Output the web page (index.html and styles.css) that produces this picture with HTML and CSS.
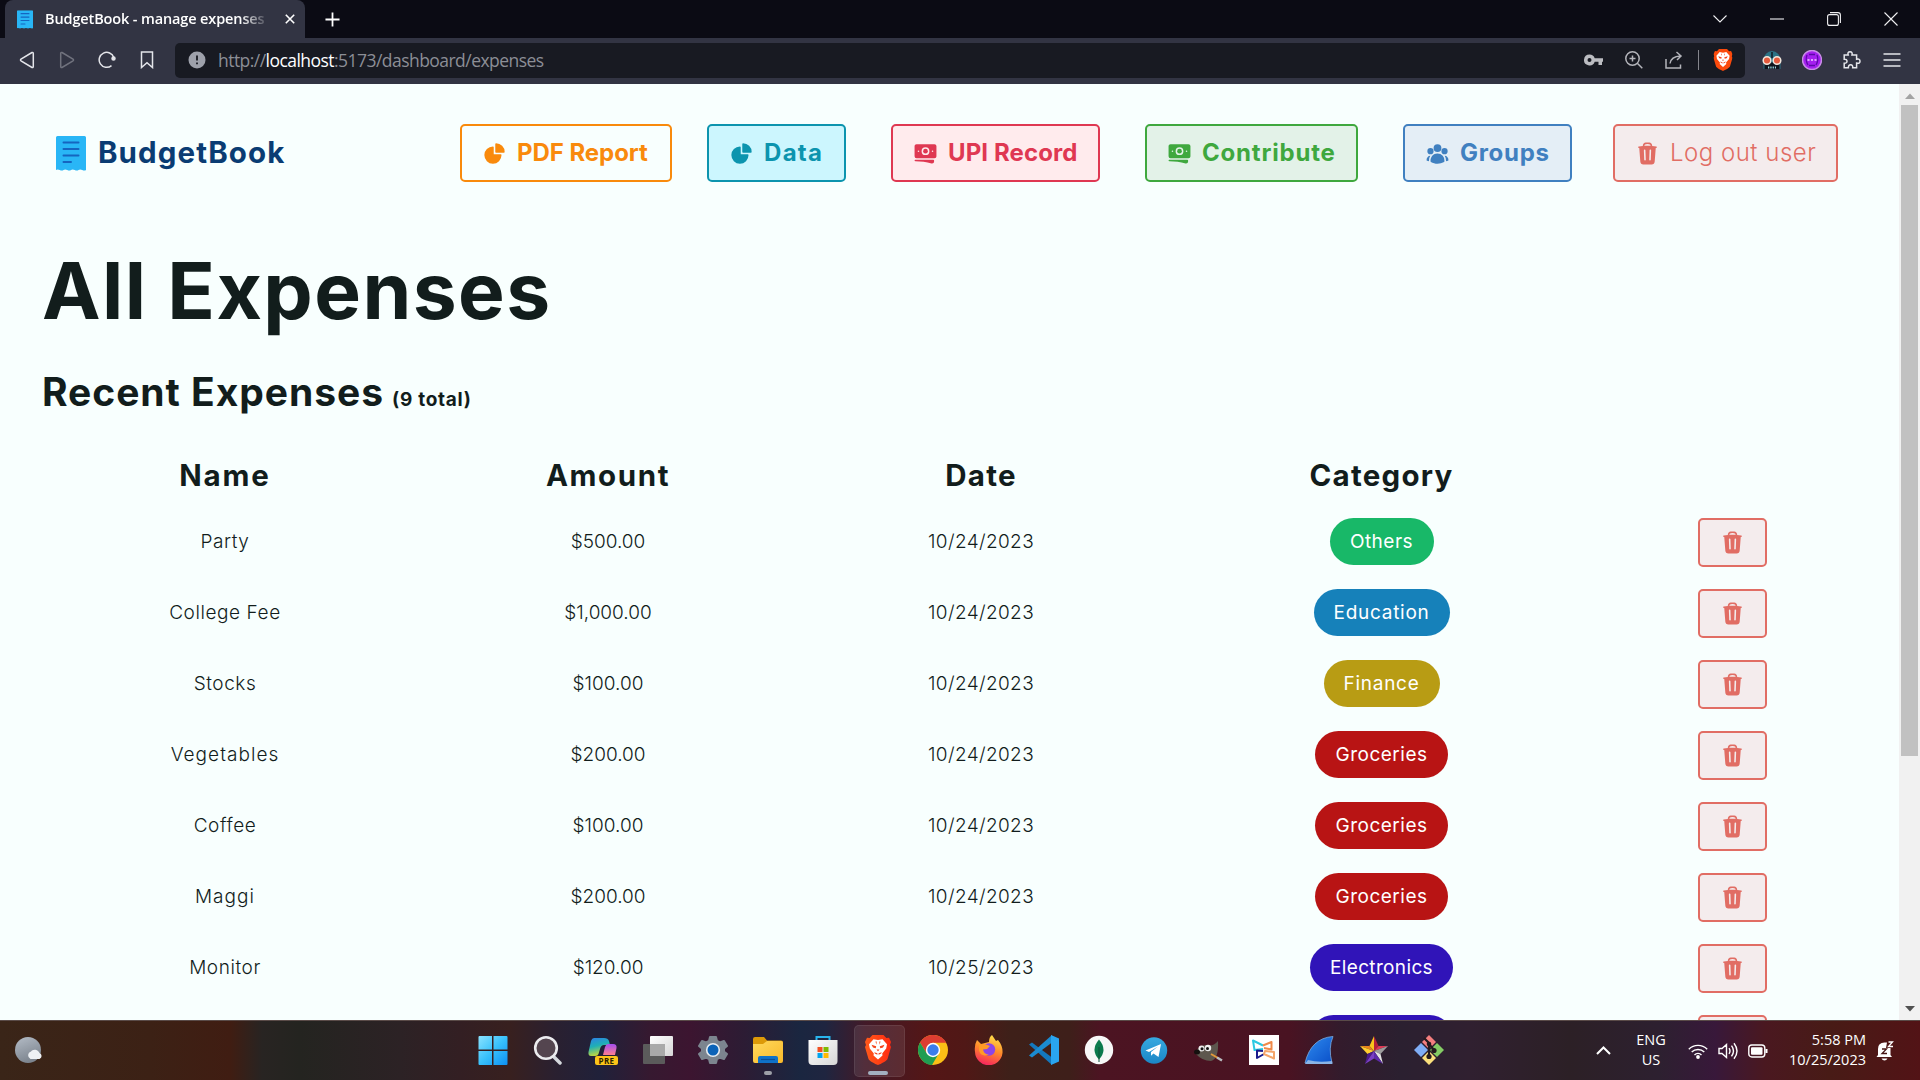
FILE: index.html
```html
<!DOCTYPE html>
<html lang="en">
<head>
<meta charset="utf-8">
<title>BudgetBook - manage expenses</title>
<link rel="stylesheet" href="styles.css">
</head>
<body>
<svg class="defs" width="0" height="0" aria-hidden="true">
  <defs>
    <linearGradient id="winblue" x1="0" y1="0" x2="1" y2="1"><stop offset="0" stop-color="#8be3ff"/><stop offset=".5" stop-color="#38c1fb"/><stop offset="1" stop-color="#0d8ff2"/></linearGradient>
    <linearGradient id="moon" x1="0" y1="0" x2="0.4" y2="1"><stop offset="0" stop-color="#b4bcc6"/><stop offset="1" stop-color="#7d858f"/></linearGradient>
    <linearGradient id="cop1" x1="0" y1="0" x2="0.3" y2="1"><stop offset="0" stop-color="#2d7fe8"/><stop offset=".5" stop-color="#1fb0b5"/><stop offset="1" stop-color="#c5d93a"/></linearGradient>
    <linearGradient id="cop2" x1="0" y1="0" x2="0" y2="1"><stop offset="0" stop-color="#a44ef0"/><stop offset="1" stop-color="#ff7d8e"/></linearGradient>
    <linearGradient id="sheet" x1="0" y1="0" x2="1" y2="1"><stop offset="0" stop-color="#ffffff"/><stop offset="1" stop-color="#d6d6d6"/></linearGradient>
    <linearGradient id="fold" x1="0" y1="0" x2="1" y2="1"><stop offset="0" stop-color="#ffd95c"/><stop offset="1" stop-color="#f9b92a"/></linearGradient>
    <linearGradient id="fox" x1="0.7" y1="0" x2="0.4" y2="1"><stop offset="0" stop-color="#ffe14a"/><stop offset=".5" stop-color="#ff8a2a"/><stop offset="1" stop-color="#f5245e"/></linearGradient>
    <linearGradient id="tele" x1="0" y1="0" x2="0" y2="1"><stop offset="0" stop-color="#36a9e0"/><stop offset="1" stop-color="#1b86c6"/></linearGradient>
    <linearGradient id="fin" x1="0" y1="0" x2="1" y2="1"><stop offset="0" stop-color="#2f8cf0"/><stop offset="1" stop-color="#0a4fc8"/></linearGradient>
    <linearGradient id="bravegrad" x1="0" y1="0" x2="1" y2="0"><stop offset="0" stop-color="#ff5a1a"/><stop offset="1" stop-color="#ff2a10"/></linearGradient>
    <symbol id="trash" viewBox="0 0 24 24"><path fill-rule="evenodd" d="M16.5 4.478v.227a48.816 48.816 0 013.878.512.75.75 0 11-.256 1.478l-.209-.035-1.005 13.07a3 3 0 01-2.991 2.77H8.084a3 3 0 01-2.991-2.77L4.087 6.66l-.209.035a.75.75 0 01-.256-1.478A48.567 48.567 0 017.5 4.705v-.227c0-1.564 1.213-2.9 2.816-2.951a52.662 52.662 0 013.369 0c1.603.051 2.815 1.387 2.815 2.951zm-6.136-1.452a51.196 51.196 0 013.273 0C14.39 3.05 15 3.684 15 4.478v.113a49.488 49.488 0 00-6 0v-.113c0-.794.609-1.428 1.364-1.452zm-.355 5.945a.75.75 0 10-1.5.058l.347 9a.75.75 0 101.499-.058l-.346-9zm5.48.058a.75.75 0 10-1.498-.058l-.347 9a.75.75 0 001.5.058l.345-9z"/></symbol>
    <symbol id="pie" viewBox="0 0 24 24"><path d="M2.25 13.5a8.25 8.25 0 018.25-8.25.75.75 0 01.75.75v6.75H18a.75.75 0 01.75.75 8.25 8.25 0 01-16.5 0z"/><path d="M12.75 3a.75.75 0 01.75-.75 8.25 8.25 0 018.25 8.25.75.75 0 01-.75.75h-7.5a.75.75 0 01-.75-.75V3z"/></symbol>
    <symbol id="notes" viewBox="0 0 24 24"><path d="M12 7.5a2.25 2.25 0 100 4.5 2.25 2.25 0 000-4.5z"/><path fill-rule="evenodd" d="M1.5 4.875C1.5 3.839 2.34 3 3.375 3h17.25c1.035 0 1.875.84 1.875 1.875v9.75c0 1.036-.84 1.875-1.875 1.875H3.375A1.875 1.875 0 011.5 14.625v-9.75zM8.25 9.75a3.75 3.75 0 117.5 0 3.75 3.75 0 01-7.5 0zM18.75 9a.75.75 0 00-.75.75v.008c0 .414.336.75.75.75h.008a.75.75 0 00.75-.75V9.75a.75.75 0 00-.75-.75h-.008zM4.5 9.75A.75.75 0 015.25 9h.008a.75.75 0 01.75.75v.008a.75.75 0 01-.75.75H5.25a.75.75 0 01-.75-.75V9.75z"/><path d="M2.25 18a.75.75 0 000 1.5c5.4 0 10.63.722 15.6 2.075 1.19.324 2.4-.558 2.4-1.82V18.75a.75.75 0 00-.75-.75H2.25z"/></symbol>
    <symbol id="people" viewBox="0 0 24 24"><path fill-rule="evenodd" d="M8.25 6.75a3.75 3.75 0 117.5 0 3.75 3.75 0 01-7.5 0zM15.75 9.75a3 3 0 116 0 3 3 0 01-6 0zM2.25 9.75a3 3 0 116 0 3 3 0 01-6 0zM6.31 15.117A6.745 6.745 0 0112 12a6.745 6.745 0 016.709 7.498.75.75 0 01-.372.568A12.696 12.696 0 0112 21.75c-2.305 0-4.47-.612-6.337-1.684a.75.75 0 01-.372-.568 6.787 6.787 0 011.019-4.38z"/><path d="M5.082 14.254a8.287 8.287 0 00-1.308 5.135 9.687 9.687 0 01-1.764-.44l-.115-.04a.563.563 0 01-.373-.487l-.01-.121a3.75 3.75 0 013.57-4.047zM20.226 19.389a8.287 8.287 0 00-1.308-5.135 3.75 3.75 0 013.57 4.047l-.01.121a.563.563 0 01-.373.486l-.115.04c-.567.2-1.156.349-1.764.441z"/></symbol>
    <symbol id="receipt" viewBox="0 0 30 35"><path fill="#29b6f6" d="M1.500 0h27q1.500 0 1.500 1.500V34q-1.500 1-3.750 0T22.500 34q-1.500 1.200-3.750 0T15 34q-1.500 1.200-3.750 0T7.500 34q-1.500 1.200-3.750 0T0 34V1.500Q0 0 1.500 0z"/><path stroke="#1565c0" stroke-width="2" stroke-linecap="round" d="M7.500 6.500h15M7.500 13h15M7.500 19.500h15M7.500 26h7.500"/></symbol>
    <symbol id="brave" viewBox="0 0 26 30"><path d="M7.500 0h11l2.800 3 2.700-.2 2 4.200-1 3 1 2-3.500 12c-.6 1.700-6.500 5-9.500 6-3-1-8.900-4.300-9.500-6L0 12l1-2-1-3 2-4.200 2.700.2z"/><path fill="#fff" d="M13 5l4.500-.8 4.500 5-.8 4.300-4 5 .3 2-4.500 4-4.500-4 .3-2-4-5L4 9.200l4.500-5z"/><path fill="#f4431a" d="M6.500 9.800l4.700 1.400-.5 2-2.700-.7zM19.500 9.800l-4.700 1.400.5 2 2.700-.7zM9.300 17.200l3.100 1.100v1.500l-2.600-1.300zM16.700 17.200l-3.100 1.100v1.500l2.600-1.300zM10.500 6.500h1.200l-.3 3.200zM15.500 6.500h-1.200l.3 3.200zM11.500 14.500h3L13 16.300z"/></symbol>
  </defs>
</svg>

<div class="screen">
  <header class="tabstrip">
    <div class="tab">
      <svg class="tab-icon" viewBox="0 0 30 35"><use href="#receipt"/></svg>
      <span class="tab-title">BudgetBook - manage expenses</span>
      <svg class="tab-close" viewBox="0 0 10 10"><path d="M.8.800l8.400 8.400M9.200.800L.8 9.200"/></svg>
    </div>
    <svg class="tab-new" viewBox="0 0 16 16"><path d="M8 .500v15M.500 8h15"/></svg>
    <div class="window-controls">
      <span><svg width="14" height="8" viewBox="0 0 14 8"><path d="M.500.500L7 7l6.500-6.500"/></svg></span>
      <span><svg width="14" height="2" viewBox="0 0 14 2"><path d="M0 1h14"/></svg></span>
      <span><svg width="14" height="14" viewBox="0 0 14 14"><rect x=".6" y="2.600" width="10.800" height="10.800" rx="2"/><path d="M3 .600h8q2.400 0 2.400 2.400v8"/></svg></span>
      <span><svg width="14" height="14" viewBox="0 0 14 14"><path d="M.500.500l13 13M13.500.500l-13 13"/></svg></span>
    </div>
  </header>

  <div class="toolbar">
    <span class="tool"><svg width="16" height="18" viewBox="0 0 16 18"><path d="M13 1.500L2 8q-1 .9 0 1.800l11 6.700q1.300.300 1.300-1.200V2.600Q14.300 1 13 1.500z"/></svg></span>
    <span class="tool tool-off"><svg width="16" height="18" viewBox="0 0 16 18"><path d="M3 1.500L14 8q1 .9 0 1.800L3 16.500q-1.300.300-1.300-1.200V2.600Q1.700 1 3 1.500z"/></svg></span>
    <span class="tool"><svg width="18" height="18" viewBox="0 0 18 18"><path d="M13.500 14.600A7.500 7.500 0 1 1 15.800 6.500"/><circle cx="15.500" cy="7.500" r="1.500" fill="#e4e5ea"/></svg></span>
    <span class="tool"><svg width="14" height="18" viewBox="0 0 14 18"><path d="M1.500 1h11v15.500L7 11.800l-5.500 4.700z"/></svg></span>
    <div class="address">
      <svg class="info" viewBox="0 0 18 18"><circle cx="9" cy="9" r="8.500" fill="#9ea1ab"/><path stroke="#181a22" stroke-width="1.800" d="M9 4.500v5M9 11.500v1.800"/></svg>
      <span class="url">http://<b>localhost</b>:5173/dashboard/expenses</span>
      <span class="tool"><svg width="19" height="12" viewBox="0 0 19 12"><path fill="#bcbdc2" stroke="none" fill-rule="evenodd" d="M5.500.500a5.500 5.500 0 0 1 5.200 3.700H19v3.600h-1V11h-3.500V7.800h-3.800A5.500 5.500 0 1 1 5.500.500zm0 3.500a2 2 0 1 0 0 4 2 2 0 0 0 0-4z"/></svg></span>
      <span class="tool tool-dim"><svg width="18" height="18" viewBox="0 0 18 18"><circle cx="7.500" cy="7.500" r="6.700"/><path d="M12.300 12.300l5 5M7.500 4.500v6M4.500 7.500h6"/></svg></span>
      <span class="tool tool-dim"><svg width="18" height="18" viewBox="0 0 18 18"><path d="M1 8v9h14.500v-3.500M5 12.500Q6 5.500 15.500 5M11.500 1l4.500 4-4 4"/></svg></span>
      <span class="divider"></span>
      <svg class="shield" viewBox="0 0 26 30" fill="#fb4a0c"><use href="#brave"/></svg>
    </div>
    <span class="tool art"><svg width="20" height="20" viewBox="0 0 20 20"><path fill="#2c7385" d="M1.500 10a8.500 9 0 0 1 17 0v9h-17z"/><path fill="#10151d" d="M2.500 12.500h15V19h-15zM9.300 2h1.400v6H9.300z"/><circle cx="5" cy="10.500" r="3.800" fill="#e55a3c" stroke="#f3e6dc" stroke-width="1.500"/><circle cx="15" cy="10.500" r="3.800" fill="#e55a3c" stroke="#f3e6dc" stroke-width="1.500"/><path stroke="#9cd5de" stroke-width="2" stroke-dasharray="1.300 1" d="M6 17.500h8"/></svg></span>
    <span class="tool art"><svg width="20" height="20" viewBox="0 0 20 20"><circle cx="10" cy="10" r="9.500" fill="#a51ff0" stroke="#c98ce8"/><path stroke="#5c0aa8" stroke-width="1.300" fill="none" d="M5 5q-2 5 1 10M15 5q2 5-1 10M7 4.500h6M7 15.500h6"/><path stroke="#f0d3ff" stroke-width="1.500" stroke-dasharray="2 1.500" d="M5.500 10h9"/></svg></span>
    <span class="tool"><svg width="18" height="18" viewBox="0 0 18 18"><path d="M1.200 4h4q-1-3.200 1.800-3.200T9 4h4.600v4.300q3.400-.9 3.400 1.900t-3.400 1.900V16.800H9.700q.4-3-2-3t-2.300 3H1.200v-4.600q2.800.1 2.800-2t-2.800-2z"/></svg></span>
    <span class="tool"><svg width="18" height="14" viewBox="0 0 18 14"><path d="M.5 1h17M.5 7h17M.5 13h17"/></svg></span>
  </div>

  <div class="viewport">
    <main class="page">
      <nav class="nav">
        <a class="brand"><svg viewBox="0 0 30 35"><use href="#receipt"/></svg><span>BudgetBook</span></a>
        <a class="btn btn-pdf"><svg><use href="#pie"/></svg><span>PDF Report</span></a>
        <a class="btn btn-data"><svg><use href="#pie"/></svg><span>Data</span></a>
        <a class="btn btn-upi"><svg><use href="#notes"/></svg><span>UPI Record</span></a>
        <a class="btn btn-contribute"><svg><use href="#notes"/></svg><span>Contribute</span></a>
        <a class="btn btn-groups"><svg><use href="#people"/></svg><span>Groups</span></a>
        <a class="btn btn-logout"><svg><use href="#trash"/></svg><span>Log out user</span></a>
      </nav>

      <h1>All Expenses</h1>
      <h2>Recent Expenses <small>(9 total)</small></h2>

      <div class="table">
        <div class="row head"><span class="h-name">Name</span><span class="h-amount">Amount</span><span>Date</span><span>Category</span><span></span></div>
        <div class="row"><span class="name">Party</span><span class="sum">$500.00</span><span class="date">10/24/2023</span><span><i class="pill others">Others</i></span><span><button class="del"><svg><use href="#trash"/></svg></button></span></div>
        <div class="row"><span class="name">College Fee</span><span class="sum">$1,000.00</span><span class="date">10/24/2023</span><span><i class="pill education">Education</i></span><span><button class="del"><svg><use href="#trash"/></svg></button></span></div>
        <div class="row"><span class="name">Stocks</span><span class="sum">$100.00</span><span class="date">10/24/2023</span><span><i class="pill finance">Finance</i></span><span><button class="del"><svg><use href="#trash"/></svg></button></span></div>
        <div class="row"><span class="name airy">Vegetables</span><span class="sum">$200.00</span><span class="date">10/24/2023</span><span><i class="pill groceries">Groceries</i></span><span><button class="del"><svg><use href="#trash"/></svg></button></span></div>
        <div class="row"><span class="name">Coffee</span><span class="sum">$100.00</span><span class="date">10/24/2023</span><span><i class="pill groceries">Groceries</i></span><span><button class="del"><svg><use href="#trash"/></svg></button></span></div>
        <div class="row"><span class="name airy">Maggi</span><span class="sum">$200.00</span><span class="date">10/24/2023</span><span><i class="pill groceries">Groceries</i></span><span><button class="del"><svg><use href="#trash"/></svg></button></span></div>
        <div class="row"><span class="name">Monitor</span><span class="sum">$120.00</span><span class="date">10/25/2023</span><span><i class="pill electronics">Electronics</i></span><span><button class="del"><svg><use href="#trash"/></svg></button></span></div>
        <div class="row"><span></span><span></span><span></span><span><i class="pill electronics"></i></span><span><button class="del"></button></span></div>
      </div>
    </main>
    <div class="scrollbar">
      <svg width="10" height="6" viewBox="0 0 10 6"><path fill="#a3a3a3" d="M0 6l5-5.500L10 6z"/></svg>
      <div class="thumb"></div>
      <svg class="down" width="10" height="6" viewBox="0 0 10 6"><path fill="#505050" d="M0 0l5 5.500L10 0z"/></svg>
    </div>
  </div>

  <footer class="taskbar">
    <svg class="weather" viewBox="0 0 28 28"><circle cx="13" cy="13" r="13" fill="url(#moon)"/><path fill="#eef1f4" d="M15.500 22a4 4 0 0 1 .5-7.500 5 5 0 0 1 8.500 1.500 3.200 3.200 0 0 1 0 6z"/></svg>
    <div class="apps">
      <span><svg viewBox="0 0 30 30"><path fill="url(#winblue)" d="M.500 2q0-1 1-1H14v13.500H.500zM15.500 1h13q1 0 1 1v12.500h-14zM.500 16H14v14H1.500q-1 0-1-1zM15.500 16h14v13q0 1-1 1h-13z"/></svg></span>
      <span><svg viewBox="0 0 30 30"><path stroke="#d5d8dd" stroke-width="3.500" stroke-linecap="round" d="M20 21l7 7"/><circle cx="13" cy="13" r="10.800" fill="#54454f" stroke="#ececef" stroke-width="2.600"/></svg></span>
      <span><svg viewBox="0 0 30 30"><path fill="url(#cop1)" d="M6 3h10q4 0 5 3l1 4h-6q-3 0-4 4l-1.500 5Q10 21 7 21H3q-3 0-2.500-4L3 6q1-3 3-3z"/><path fill="url(#cop2)" d="M20 9h5q4 0 3.500 4l-1.500 7H15l2-8q1-3 3-3z"/><rect x="7" y="21" width="23" height="9" rx="2" fill="#fcc419"/><text x="18.500" y="28.600" text-anchor="middle" class="pre">PRE</text></svg></span>
      <span><svg viewBox="0 0 30 30"><rect y="9" width="22" height="20" rx="1" fill="#5b5b5b"/><rect x="7" y="1" width="23" height="20" rx="1" fill="url(#sheet)"/><rect x="7" y="9" width="15" height="12" fill="#a9a9a9"/></svg></span>
      <span><svg viewBox="0 0 30 30"><path fill="#7c858f" stroke="#7c858f" stroke-width="2" stroke-linejoin="round" d="M12 2h6l1 4 3 1.500L26 6l3 5-3 2.500v3L29 19l-3 5-4-1.300L19 24l-1 4h-6l-1-4-3-1.300L4 24l-3-5 3-2.500v-3L1 11l3-5 4 1.500L11 6z"/><circle cx="15" cy="15" r="6.300" fill="#0b63b8" stroke="#e8edf2" stroke-width="1.600"/></svg></span>
      <span class="open"><svg viewBox="0 0 30 30"><path fill="#dd9a08" d="M0 4q0-2 2-2h9l3 3.500h14q2 0 2 2V13H0z"/><path fill="url(#fold)" d="M0 9h10l4-3h14q2 0 2 2v18q0 2-2 2H2q-2 0-2-2z"/><path fill="#0f72c8" d="M5 28v-5q0-2 2-2h16q2 0 2 2v5z"/><path stroke="#0a4f96" stroke-width="1.200" d="M8 24.500h14"/></svg></span>
      <span><svg viewBox="0 0 30 30"><path fill="none" stroke="#29b5ee" stroke-width="2" d="M8.500 6V2h13v4"/><path fill="url(#sheet)" d="M.500 5h29v21q0 4-4 4h-21q-4 0-4-4z"/><path fill="#f25022" d="M9.500 12h5v5h-5z"/><path fill="#7fba00" d="M15.500 12h5v5h-5z"/><path fill="#00a4ef" d="M9.500 18h5v5h-5z"/><path fill="#ffb900" d="M15.500 18h5v5h-5z"/></svg></span>
      <span class="active"><svg viewBox="0 0 26 30" fill="url(#bravegrad)"><use href="#brave"/></svg></span>
      <span><svg viewBox="0 0 30 30"><circle cx="15" cy="15" r="15" fill="#fbbf16"/><path fill="#dd3d31" d="M15 15V7.800h13.200A15 15 0 0 0 2 7.500L8.500 18z"/><path fill="#1f9d52" d="M2 7.500A15 15 0 0 0 14 30l6.500-11L15 15 8.500 18z"/><circle cx="15" cy="15" r="7.200" fill="#fff"/><circle cx="15" cy="15" r="5.700" fill="#3b7ded"/></svg></span>
      <span><svg viewBox="0 0 30 30"><path fill="url(#fox)" d="M3 5l4 4 4-1 4-1Q15 2 18 0l4 6 2-1q5 6 4.500 13A13.800 13.800 0 0 1 1 17Q0 10 3 5z"/><circle cx="15" cy="14.500" r="6.200" fill="#8b45e8"/><path fill="#ff9a27" d="M5 9l7 .5 4 1.500-3 3-4 .5q1 5 6 5-8 3-10-4z"/></svg></span>
      <span><svg viewBox="0 0 30 30"><path fill="#1478bd" d="M0 9.500L3 7.500l20 15V30z"/><path fill="#1b8bd0" d="M0 20.500L3 22.500l20-15V0z"/><path fill="#2aa5f0" d="M22 0l8 3.500v23L22 30z"/></svg></span>
      <span><svg viewBox="0 0 30 30"><circle cx="15" cy="15" r="14.200" fill="#f7f7f7"/><path fill="#0b7a4d" d="M15 4.500q9 10.500 0 20-9-9.500 0-20z"/><path stroke="#11523b" stroke-width="1" d="M15 12v15"/></svg></span>
      <span><svg viewBox="0 0 30 30"><circle cx="15" cy="15.500" r="13.200" fill="url(#tele)"/><path fill="#fff" d="M6.500 15.500L22 9l-2.500 13-5-3.500-2.500 2.300V17l7-5.500-9 5.500z"/></svg></span>
      <span><svg viewBox="0 0 30 30"><path fill="#5d574e" d="M2 17q3-7 10-7 7 2 12-4 1 18-7 20-9 0-15-7z"/><circle cx="7.500" cy="13.500" r="3" fill="#eee"/><circle cx="14" cy="13" r="3.200" fill="#eee"/><circle cx="8" cy="13.800" r="1.500" fill="#111"/><circle cx="13.500" cy="13.500" r="1.500" fill="#111"/><ellipse cx="3" cy="17" rx="3" ry="2.500" fill="#15110f"/><path stroke="#e29a3b" stroke-width="2" d="M17 19l7 4"/><path stroke="#b9bcc0" stroke-width="2.500" d="M23 22.500l5 3"/></svg></span>
      <span><svg viewBox="0 0 30 30"><path fill="#fff" d="M0 0h30v30H0z"/><g fill="none" stroke-width="2" stroke-linejoin="round"><path stroke="#2bc9e2" d="M14 10.500L4 5.500l1.500 9.500 8.500-1"/><path stroke="#f08a4a" d="M14 10.500L22.500 7v7.500L15 13"/><path stroke="#1a1a8c" d="M14 16l-6-.5v7.500l7-4"/><path stroke="#f5a56a" d="M15 19l10 4.500V17l-9-1z"/></g></svg></span>
      <span><svg viewBox="0 0 30 30"><path fill="url(#fin)" stroke="#7ba9dc" stroke-width=".8" d="M1 28Q7 3 29 1.500 24 13 28 28z"/><path fill="#8ab4e6" d="M1 29l3-4q10 3 24 1l.500 3z"/></svg></span>
      <span><svg viewBox="0 0 30 30"><path fill="#f8c51c" d="M15 1v15L10.500 11z"/><path fill="#e8851c" d="M1 11h9.500L15 16z"/><path fill="#ffcf30" d="M1 11l7.500 8L15 16z"/><path fill="#4a1b8c" d="M8.500 19L6 29l9-13z"/><path fill="#7a3fc4" d="M15 16L6 29l9-5.500z"/><path fill="#b3203a" d="M15 1v15l4.500-5z"/><path fill="#df3a55" d="M19.500 11H29l-14 5z"/><path fill="#9c9c9c" d="M29 11l-7.500 8L15 16z"/><path fill="#e3e3e3" d="M21.500 19L24 29l-9-13z"/><path fill="#5c2aa8" d="M24 29l-9-5.500V16z"/></svg></span>
      <span><svg viewBox="0 0 30 30"><path fill="#f47f7f" d="M15 0l7 7-7 7-7-7z"/><path fill="#7fadf5" d="M7 8l7 7-7 7-7-7z"/><path fill="#84cc64" d="M23 8l7 7-7 7-7-7z"/><path fill="#fbe07c" d="M15 16l7 7-7 7-7-7z"/><path stroke="#241a1e" stroke-width="2.200" fill="none" d="M10 3l5 5v14M15 9l5 6"/><circle cx="15" cy="9" r="2.300" fill="#241a1e"/><circle cx="20" cy="15.500" r="2.600" fill="#241a1e"/><circle cx="15" cy="21.500" r="2.600" fill="#241a1e"/></svg></span>
    </div>
    <div class="tray">
      <svg class="chevron" width="15" height="9" viewBox="0 0 15 9"><path d="M1 8l6.500-6.500L14 8"/></svg>
      <div class="lang">ENG<br>US</div>
      <svg class="wifi" width="20" height="16" viewBox="0 0 20 16"><path d="M.800 6.200a13 13 0 0 1 18.400 0M3.700 9.100a9 9 0 0 1 12.600 0M6.500 11.900a5 5 0 0 1 7 0"/><circle cx="10" cy="14" r="1.900" fill="#fff" stroke="none"/></svg>
      <svg class="volume" width="20" height="18" viewBox="0 0 20 18"><path d="M1 6.500h3L8.500 2.500v13L4 11.500H1zM11 6.200q2 2.800 0 5.600M13.500 3.700q4 5.300 0 10.600M16 1.200q6 7.800 0 15.600"/></svg>
      <svg class="battery" width="20" height="14" viewBox="0 0 20 14"><rect x=".8" y="1" width="16" height="12" rx="3"/><rect x="3" y="3.200" width="11.500" height="7.600" rx="1" fill="#fff" stroke="none"/><path d="M18.500 5v4" stroke-width="2"/></svg>
      <div class="clock">5:58 PM<br>10/25/2023</div>
      <svg class="bell" width="18" height="20" viewBox="0 0 18 20"><path fill="#fff" d="M2 14V8q0-6.500 6.500-6.500H11L10 7h4.500v7l1.500 2H.500zM5.500 17.500h6q-1 2-3 2t-3-2z"/><path fill="none" stroke="#481716" stroke-width="1.300" d="M6 8h4.500L6 12.500h5"/><path fill="none" stroke="#fff" stroke-width="1.300" d="M12.500 1h4l-4 4.500h4.500"/></svg>
    </div>
  </footer>
</div>
</body>
</html>
```
FILE: styles.css
```css
* { box-sizing: border-box; }
body { margin: 0; overflow: hidden; font-family: Inter, "Noto Sans", sans-serif; color: #121d1c; }
svg { display: block; flex: none; }
.defs { position: absolute; }
.screen { width: 1920px; height: 1080px; display: flex; flex-direction: column; }

/* browser chrome */
.tabstrip { height: 38px; background: #0b0b14; display: flex; align-items: center; padding-left: 5px; font-family: "Open Sans", sans-serif; }
.tab { width: 300px; height: 38px; padding: 0 10px 0 12px; background: #323443; border-radius: 8px 8px 0 0; display: flex; align-items: center; }
.tab-icon { width: 16px; height: 19px; }
.tab-title { width: 220px; margin-left: 12px; overflow: hidden; white-space: nowrap; font-size: 14.5px; font-weight: 600; line-height: 20px; letter-spacing: -.13px; color: #fff; -webkit-mask-image: linear-gradient(90deg, #000 195px, transparent 225px); mask-image: linear-gradient(90deg, #000 195px, transparent 225px); }
.tab-close { width: 10px; height: 10px; margin-left: 20px; stroke: #fff; stroke-width: 1.6; }
.tab-new { width: 15px; height: 15px; margin-left: 20px; stroke: #fff; stroke-width: 1.9; }
.window-controls { display: flex; margin-left: auto; padding-right: 1px; }
.window-controls span { width: 57px; display: flex; align-items: center; justify-content: center; }
.window-controls svg { fill: none; stroke: #f0f0f2; stroke-width: 1.1; }
.toolbar { height: 46px; background: #323443; display: flex; align-items: center; padding: 0 8px 2px 7px; }
.tool { width: 40px; flex: none; display: flex; align-items: center; justify-content: center; }
.tool > svg { fill: none; stroke: #e4e5ea; stroke-width: 1.5; }
.tool-off { opacity: .35; }
.tool-dim > svg { stroke: #b4b5bb; }
.art > svg { stroke: none; }
.address { flex: 1; height: 35px; margin: 0 7px 0 8px; background: #181a22; border-radius: 5px; display: flex; align-items: center; }
.info { width: 18px; height: 18px; margin-left: 13px; }
.url { margin: 0 auto 0 12px; font: 17.5px/24px "Open Sans", sans-serif; letter-spacing: -.54px; color: #8c8e96; }
.url b { font-weight: 400; color: #fff; }
.divider { width: 1.5px; height: 20px; margin-left: 4px; background: #85868d; }
.shield { width: 20px; height: 22px; margin: 0 12px 0 14px; }

/* scrolling viewport */
.viewport { height: 936px; display: flex; overflow: hidden; background: #f8fffe; }
.page { width: 1899px; padding: 40px 45px 0 43px; }
.scrollbar { width: 21px; background: #f1f1f1; display: flex; flex-direction: column; align-items: center; padding: 9px 0 8px; }
.thumb { width: 17px; height: 651px; margin-top: 6px; background: #c1c1c1; }
.scrollbar .down { margin-top: auto; }

.nav { height: 58px; display: flex; align-items: center; }
.brand { display: flex; align-items: center; gap: 12px; width: 404px; padding-left: 13px; font-size: 29.5px; font-weight: 700; letter-spacing: 1.1px; color: #0a3c73; }
.brand span, .btn span { padding-bottom: 2px; }
.brand svg { width: 30px; height: 35px; }
.btn { height: 58px; display: flex; align-items: center; gap: 10px; padding-left: 20px; margin-left: 45px; border: 2px solid; border-radius: 5px; font-size: 24px; font-weight: 700; white-space: nowrap; }
.btn svg, .del svg { width: 25px; height: 25px; fill: currentColor; }
.btn-pdf { width: 212px; margin-left: 13px; color: #f98a0c; letter-spacing: -.05px; }
.btn-data { width: 139px; margin-left: 35px; color: #0c94ae; background: #ccf6fe; letter-spacing: 1.3px; }
.btn-upi { width: 209px; color: #df3852; background: #ffebed; letter-spacing: .1px; }
.btn-contribute { width: 213px; color: #3fa83e; background: #e3f2e8; letter-spacing: .8px; }
.btn-groups { width: 169px; color: #4080c0; background: #e4eef6; letter-spacing: .7px; }
.btn-logout { width: 225px; margin-left: 41px; color: #e16d64; background: #f4eced; font-weight: 300; letter-spacing: .5px; }

h1 { margin: 59px 0 0 -1px; font-size: 78.5px; line-height: 100px; font-weight: 700; letter-spacing: 1.4px; }
h2 { margin: 26px 0 0 -1px; font-size: 39px; line-height: 50px; font-weight: 700; letter-spacing: .95px; }
h2 small { font-size: 19px; line-height: 19px; letter-spacing: .7px; margin-left: -2px; }

.table { margin-top: 26px; }
.row { height: 71px; display: grid; grid-template-columns: 364px 402px 344px 457px 244px; align-items: center; font-size: 19px; font-weight: 300; }
.row > span { display: flex; justify-content: center; }
.head { height: 63px; font-size: 29.5px; font-weight: 700; letter-spacing: 1.25px; }
.h-name { letter-spacing: 1.9px; }
.h-amount { letter-spacing: 1.6px; }
.name { letter-spacing: .58px; }
.airy { letter-spacing: 1.05px; }
.date { letter-spacing: .37px; }
.pill { width: 133px; height: 47px; border-radius: 24px; display: flex; align-items: center; justify-content: center; font-style: normal; font-weight: 400; color: #fff; letter-spacing: .5px; }
.others { width: 104px; background: #18b868; }
.education { width: 136px; background: #1681ba; letter-spacing: .73px; }
.finance { width: 116px; background: #b89c14; letter-spacing: .73px; }
.groceries { background: #b81414; }
.electronics { width: 143px; background: #3014b8; letter-spacing: .35px; }
.del { width: 69px; height: 49px; margin-top: 2px; padding: 0; display: flex; align-items: center; justify-content: center; border: 2px solid #e16d64; border-radius: 5px; background: #f4eced; color: #e16d64; }

/* taskbar */
.taskbar { height: 60px; display: flex; align-items: center; border-top: 1px solid #5a4b48; color: #fff; background: linear-gradient(90deg, #3a2518 0, #3c2115 150px, #401d12 230px, #282422 262px, #242420 300px, #2c2225 400px, #331f23 460px, #38201f 510px, #2a2030 555px, #20213a 600px, #361930 650px, #3c1530 690px, #2c1c34 745px, #1a2640 800px, #1f2540 825px, #421a28 865px, #541616 930px, #501816 965px, #3e2019 1010px, #3e1f1a 1070px, #4c1422 1100px, #491322 1290px, #331b2c 1340px, #2b2030 1400px, #302030 1470px, #2c2026 1570px, #2d2030 1660px, #38183a 1715px, #4a1820 1765px, #481b16 1830px, #521316 1920px); }
.weather { width: 28px; height: 28px; margin-left: 15px; }
.apps { display: flex; margin-left: 422.2px; }
.apps span { width: 55.1px; height: 59px; padding-bottom: 1px; display: flex; align-items: center; justify-content: center; position: relative; }
.apps svg { width: 30px; height: 30px; }
.pre { font: 700 8px "Open Sans", sans-serif; fill: #2a2200; letter-spacing: .4px; }
.apps .active::before { content: ""; position: absolute; left: 3px; top: 4px; width: 49px; height: 50px; border-radius: 5px; background: rgba(255,255,255,.09); border: 1px solid rgba(255,255,255,.08); }
.active svg { position: relative; }
.open::after, .active::after { content: ""; position: absolute; bottom: 5px; width: 8px; height: 4px; border-radius: 2px; background: #9da0a8; }
.active::after { width: 20px; background: #a3b0c0; }
.tray { display: flex; align-items: center; margin-left: auto; padding-right: 26px; font: 14.5px/20px "Open Sans", sans-serif; }
.tray > svg { fill: none; stroke: #fff; stroke-width: 1.4; }
.tray .chevron { stroke-width: 2; }
.lang { width: 40px; margin: 0 17px 2px 20px; text-align: center; }
.volume { margin-left: 10px; }
.battery { margin-left: 10px; }
.clock { width: 78px; margin: 0 0 2px 20px; text-align: right; white-space: nowrap; }
.tray .bell { margin-left: 10px; stroke: none; }
```
